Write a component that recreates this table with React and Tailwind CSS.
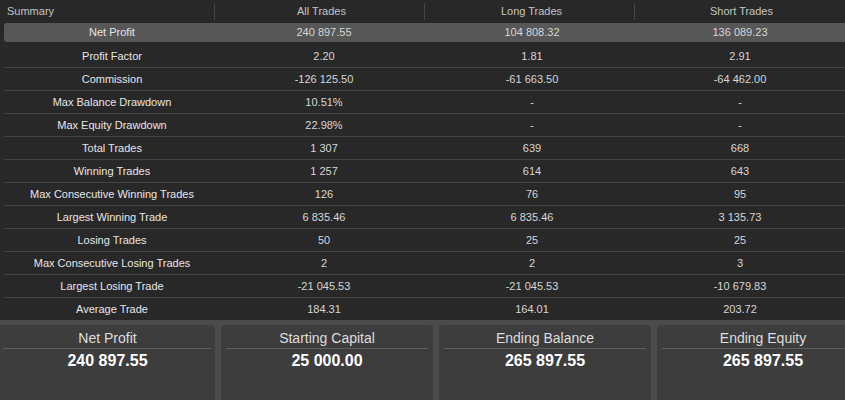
const rows = [
  ["Net Profit", "240 897.55", "104 808.32", "136 089.23"],
  ["Profit Factor", "2.20", "1.81", "2.91"],
  ["Commission", "-126 125.50", "-61 663.50", "-64 462.00"],
  ["Max Balance Drawdown", "10.51%", "-", "-"],
  ["Max Equity Drawdown", "22.98%", "-", "-"],
  ["Total Trades", "1 307", "639", "668"],
  ["Winning Trades", "1 257", "614", "643"],
  ["Max Consecutive Winning Trades", "126", "76", "95"],
  ["Largest Winning Trade", "6 835.46", "6 835.46", "3 135.73"],
  ["Losing Trades", "50", "25", "25"],
  ["Max Consecutive Losing Trades", "2", "2", "3"],
  ["Largest Losing Trade", "-21 045.53", "-21 045.53", "-10 679.83"],
  ["Average Trade", "184.31", "164.01", "203.72"],
];

const cards = [
  ["Net Profit", "240 897.55"],
  ["Starting Capital", "25 000.00"],
  ["Ending Balance", "265 897.55"],
  ["Ending Equity", "265 897.55"],
];

function Cells({ row }) {
  return (
    <>
      <div className="w-[216px] shrink-0 text-center text-[#e6e6e6]">{row[0]}</div>
      <div className="w-[208px] shrink-0 text-center text-[#d6d6d6]">{row[1]}</div>
      <div className="w-[208px] shrink-0 text-center text-[#d6d6d6]">{row[2]}</div>
      <div className="w-[208px] shrink-0 text-center text-[#d6d6d6]">{row[3]}</div>
    </>
  );
}

export default function App() {
  return (
    <div
      className="w-[845px] h-[400px] overflow-hidden bg-[#282828] flex flex-col text-[11px]"
      style={{ fontFamily: '"Liberation Sans", Arial, sans-serif' }}
    >
      {/* header */}
      <div className="flex h-[22px] shrink-0 items-center text-[#c4c4c4]">
        <div className="w-[214px] shrink-0 pl-[7px]">Summary</div>
        {["All Trades", "Long Trades", "Short Trades"].map((h) => (
          <div key={h} className="flex items-center w-[210px] shrink-0">
            <div className="w-px h-[17px] bg-[#454545]" />
            <div className="flex-1 text-center pl-[4px]">{h}</div>
          </div>
        ))}
      </div>

      {/* rows */}
      <div className="flex flex-col pl-[4px] shrink-0">
        {rows.map((row, i) =>
          i === 0 ? (
            <div key={row[0]} className="h-[23px] pt-px">
              <div className="flex items-center h-[19px] bg-[#575757] rounded-l-[3px]">
                <Cells row={row} />
              </div>
            </div>
          ) : (
            <div
              key={row[0]}
              className={`flex items-center ${
                i === rows.length - 1 ? "h-[22px]" : "h-[23px] border-b border-[#424242]"
              }`}
            >
              <Cells row={row} />
            </div>
          )
        )}
      </div>

      {/* summary cards */}
      <div className="flex-1 bg-[#4b4b4b] pt-[5px] overflow-hidden">
        <div className="flex gap-[6px] h-full">
          {cards.map(([title, value], i) => (
            <div
              key={title}
              className={`shrink-0 h-full bg-[#3d3d3d] flex flex-col ${
                i === 0 ? "w-[215px] rounded-tr-[4px]" : "w-[212px] rounded-t-[4px]"
              }`}
            >
              <div className="pt-[5px] text-[14px] leading-[16px] text-center text-[#dedede]">
                {title}
              </div>
              <div
                className={`mt-[2px] h-px bg-[#5e5e5e] ${
                  i === 0 ? "ml-[3px] mr-[4px]" : "mx-[5px]"
                }`}
              />
              <div className="mt-[3px] text-[16px] leading-[18px] font-bold text-center text-white">
                {value}
              </div>
            </div>
          ))}
        </div>
      </div>
    </div>
  );
}
